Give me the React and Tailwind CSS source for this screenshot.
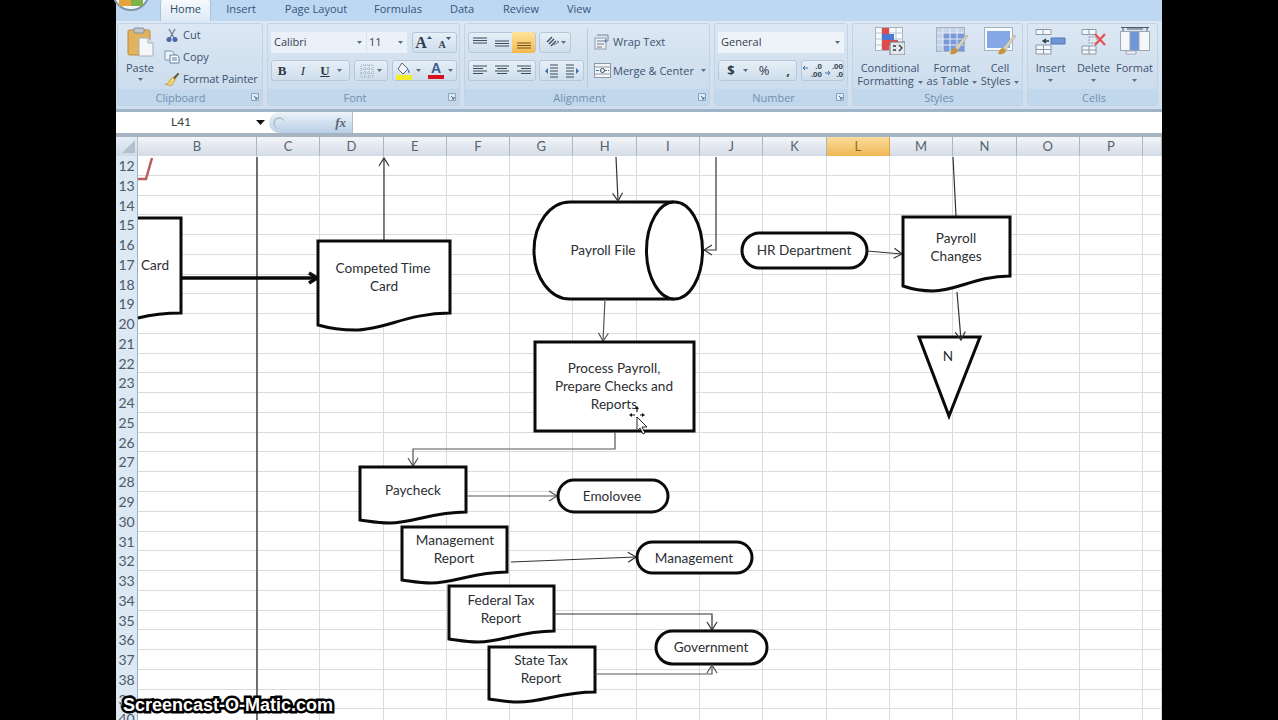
import { Fragment } from 'react'

const tabs = [
  { label: 'Home', width: 'w-[51px]', active: true },
  { label: 'Insert', width: 'w-[60px]' },
  { label: 'Page Layout', width: 'w-[90px]' },
  { label: 'Formulas', width: 'w-[74px]' },
  { label: 'Data', width: 'w-[54px]' },
  { label: 'Review', width: 'w-[64px]' },
  { label: 'View', width: 'w-[52px]' },
]

const columns = ['C', 'D', 'E', 'F', 'G', 'H', 'I', 'J', 'K', 'L', 'M', 'N', 'O', 'P', '']
const rows = Array.from({ length: 29 }, (_, i) => i + 12)

function Caret({ className = '' }) {
  return (
    <svg width="5" height="3" viewBox="0 0 5 3" className={`shrink-0 ${className}`}>
      <path d="M0 0h5L2.5 3z" fill="#5a6f86" />
    </svg>
  )
}

function Launcher() {
  return (
    <svg width="8" height="8" viewBox="0 0 8 8" className="shrink-0">
      <path d="M.5.5h7v7h-7z" fill="#dce8f4" stroke="#8ba3bb" />
      <path d="M3 3l3 3M6 4v2H4" stroke="#51667e" fill="none" />
    </svg>
  )
}

function Group({ label, className, labelClass = '', children }) {
  return (
    <div className={`flex h-[83px] shrink-0 flex-col overflow-hidden rounded-[3px] border border-[#c2d3e4] bg-gradient-to-b from-[#dce7f3] to-[#c9daeb] ${className}`}>
      <div className="flex min-h-0 flex-1">{children}</div>
      <div className="flex h-[16px] shrink-0 items-center bg-[#c1d7ec] pr-[3px]">
        <span className={`flex-1 text-center text-[11px] leading-none text-[#7590ad] ${labelClass}`}>{label}</span>
        {label !== 'Styles' && label !== 'Cells' && <Launcher />}
      </div>
    </div>
  )
}

function ButtonGroup({ className = '', children }) {
  return (
    <div className={`flex h-[21px] items-center rounded-[3px] border border-[#b5c8db] bg-gradient-to-b from-[#e7eff7] to-[#cfdeec] ${className}`}>
      {children}
    </div>
  )
}

function PasteIcon() {
  return (
    <svg width="27" height="30" viewBox="0 0 27 30">
      <rect x="1" y="3" width="22" height="25" rx="1.5" fill="#e3b25f" stroke="#b98a3e" />
      <rect x="7" y="1" width="10" height="5" rx="1" fill="#bfc7cf" stroke="#848f9a" />
      <path d="M12 11h9l5 5v13H12z" fill="#f4f6f8" stroke="#a7b1bb" />
      <path d="M21 11v5h5" fill="#dfe5ea" stroke="#a7b1bb" />
    </svg>
  )
}

function CutIcon() {
  return (
    <svg width="14" height="15" viewBox="0 0 14 15">
      <path d="M4 1l5 9M10 1L5 10" stroke="#7b8794" strokeWidth="1.5" />
      <circle cx="4" cy="11.5" r="2.5" fill="#4a66a8" />
      <circle cx="10" cy="11.5" r="2.5" fill="#4a66a8" />
    </svg>
  )
}

function CopyIcon() {
  return (
    <svg width="16" height="14" viewBox="0 0 16 14">
      <path d="M1 1h7l2 2v7H1z" fill="#eef3f8" stroke="#8097b0" />
      <path d="M6 5h7l2 2v6H6z" fill="#f9fbfd" stroke="#5f7fa6" />
      <path d="M8 8h5M8 10h5" stroke="#5f7fa6" />
    </svg>
  )
}

function PainterIcon() {
  return (
    <svg width="16" height="14" viewBox="0 0 16 14">
      <path d="M9 6l5-5 1 1-5 6z" fill="#6f5a38" stroke="#4f3f26" strokeWidth=".5" />
      <path d="M9 5l2 3-3 5c-2 1-5 0-7-1 3 0 4-1 4-3z" fill="#f2d46b" stroke="#a98b2f" strokeWidth=".6" />
    </svg>
  )
}

function GrowIcon({ small }) {
  return (
    <span className="flex w-[21px] items-start justify-center font-['Liberation_Serif',serif] font-bold leading-none text-[#2e3c4c]">
      <span className={small ? 'mt-[5px] text-[10px]' : 'mt-[1px] text-[16px]'}>A</span>
      <svg width="5" height="3" viewBox="0 0 5 3" className="mt-[2px]">
        <path d={small ? 'M0 0h5L2.5 3z' : 'M0 3h5L2.5 0z'} fill="#36557c" />
      </svg>
    </span>
  )
}

function BordersIcon() {
  return (
    <svg width="14" height="14" viewBox="0 0 14 14">
      <path d="M1 1h12v12H1zM5 1v12M9 1v12M1 5h12M1 9h12" fill="none" stroke="#9aa7b4" strokeDasharray="1 1" />
    </svg>
  )
}

function FillIcon() {
  return (
    <svg width="16" height="18" viewBox="0 0 16 18">
      <path d="M6 1l6 6-5 5-5-5z" fill="#f3f6f9" stroke="#56677a" />
      <path d="M12 7c2 2 2 4 1 4s-1-2-1-4z" fill="#3f78c2" />
      <rect x="0" y="13" width="16" height="5" fill="#f4ee29" />
    </svg>
  )
}

function FontColorIcon() {
  return (
    <span className="flex w-[16px] flex-col items-center">
      <span className="font-['Liberation_Sans',sans-serif] text-[14px] font-bold leading-[13px] text-[#3c5a94]">A</span>
      <span className="h-[4px] w-[16px] bg-[#d8121f]" />
    </span>
  )
}

// align lines: each entry is [x1, x2]
function Lines({ y, spans, w = 16, color = '#3d4a58' }) {
  return (
    <svg width={w} height="14" viewBox={`0 0 ${w} 14`}>
      {spans.map((s, i) => (
        <path key={i} d={`M${s[0]} ${y + i * 2.5}H${s[1]}`} stroke={color} strokeWidth="1.2" />
      ))}
    </svg>
  )
}

function OrientIcon() {
  return (
    <svg width="15" height="13" viewBox="0 0 15 13">
      <path d="M2 6l5-5M4 8l5-5M6 10l5-5" stroke="#3f4d5d" strokeWidth="1.4" />
      <path d="M9 9l5-3-2-1" stroke="#6a7d92" fill="none" />
    </svg>
  )
}

function IndentIcon({ flip }) {
  return (
    <svg width="15" height="14" viewBox="0 0 15 14" className={flip ? '-scale-x-100' : ''}>
      <path d="M6 1h8M6 4h8M6 7h8M6 10h8M6 13h8" stroke="#3d4a58" />
      <path d="M4 4L1 7l3 3z" fill="#3f6fb0" />
    </svg>
  )
}

function DecimalIcon({ top, bottom, arrowTop }) {
  return (
    <svg width="20" height="17" viewBox="0 0 20 17">
      <path d={arrowTop ? 'M1 6h5M3 4L1 6l2 2' : 'M2 11h5M5 9l2 2-2 2'} fill="none" stroke="#3f6fb0" />
      <text x="20" y="7" textAnchor="end" fontFamily="Liberation Sans, sans-serif" fontSize="8" fontWeight="700" fill="#2e3c4c">{top}</text>
      <text x="20" y="15" textAnchor="end" fontFamily="Liberation Sans, sans-serif" fontSize="8" fontWeight="700" fill="#2e3c4c">{bottom}</text>
    </svg>
  )
}

function WrapIcon() {
  return (
    <svg width="17" height="17" viewBox="0 0 17 17">
      <rect x="1" y="5" width="11" height="11" fill="#eef1f4" stroke="#909ba6" />
      <path d="M3 8h7M3 11h7M3 14h5" stroke="#6e7b88" />
      <path d="M3 2h11v6h-2" stroke="#7a8794" fill="none" />
      <path d="M12 6l-2 2 2 2z" fill="#3f6fb0" />
    </svg>
  )
}

function MergeIcon() {
  return (
    <svg width="17" height="15" viewBox="0 0 17 15">
      <rect x=".5" y=".5" width="16" height="14" fill="#f3f5f7" stroke="#8c98a4" />
      <path d="M.5 4h16M.5 11h16" stroke="#8c98a4" />
      <path d="M2 7.5h13" stroke="#3f6fb0" strokeDasharray="3 1" />
      <circle cx="8.5" cy="7.5" r="2" fill="#f3f5f7" stroke="#3d4a58" />
    </svg>
  )
}

function ConditionalIcon() {
  return (
    <svg width="30" height="28" viewBox="0 0 30 28">
      <rect x=".5" y=".5" width="27" height="23" fill="#f7fafc" stroke="#a5b3c1" />
      <path d="M7 1v23M14 1v23M21 1v23M1 6h27M1 12h27M1 18h27" stroke="#b7c4d1" />
      <rect x="7" y="1" width="7" height="6" fill="#df4b46" />
      <rect x="7" y="7" width="12" height="6" fill="#4d78d2" />
      <rect x="7" y="13" width="16" height="5" fill="#df4b46" />
      <rect x="7" y="18" width="7" height="5" fill="#df4b46" />
      <rect x="15" y="15" width="15" height="13" fill="#e4e7ea" stroke="#6b7580" />
      <path d="M18 19h3M18 23h3M24 18l3 3-3 3" stroke="#2f3a46" fill="none" strokeWidth="1.3" />
    </svg>
  )
}

function TableIcon() {
  return (
    <svg width="32" height="28" viewBox="0 0 32 28">
      <rect x=".5" y=".5" width="28" height="24" fill="#c5d3e8" stroke="#a5b3c1" />
      <rect x="7" y="6" width="21" height="18" fill="#7a9ad7" />
      <path d="M7 1v24M14 1v24M21 1v24M1 6h27M1 12h27M1 18h27" stroke="#e6edf6" />
      <path d="M19 21L30 8l2 1-10 14z" fill="#d8d2c0" stroke="#a79f89" strokeWidth=".5" />
      <path d="M14 27c1-4 3-6 5-6l3 2c0 3-4 5-8 4z" fill="#c8923a" />
    </svg>
  )
}

function StylesIcon() {
  return (
    <svg width="32" height="28" viewBox="0 0 32 28">
      <rect x=".5" y=".5" width="28" height="23" fill="#f7fafc" stroke="#a5b3c1" />
      <rect x="3" y="4" width="23" height="17" fill="#86a7e6" />
      <path d="M19 21L30 8l2 1-10 14z" fill="#d8d2c0" stroke="#a79f89" strokeWidth=".5" />
      <path d="M14 27c1-4 3-6 5-6l3 2c0 3-4 5-8 4z" fill="#c8923a" />
    </svg>
  )
}

function InsertIcon() {
  return (
    <svg width="32" height="26" viewBox="0 0 32 26">
      <path d="M1 .5h15v5H1zM1 5.500h15M8 .5v5M1 16h15v9H1zM8.500 16v9M1 20.500h15" fill="#f5f8fb" stroke="#8a98a7" />
      <path d="M16 9h14v6H16z" fill="#6f96d6" stroke="#5679b6" />
      <path d="M8 12h6M11 10l-3 2 3 2" stroke="#2e3a48" fill="none" strokeWidth="1.3" />
    </svg>
  )
}

function DeleteIcon() {
  return (
    <svg width="26" height="26" viewBox="0 0 26 26">
      <path d="M1 .5h14v5H1zM8 .5v5M1 17h14v8H1zM8 17v8M1 21h14" fill="#f5f8fb" stroke="#8a98a7" />
      <path d="M8 8h8v6H8z" fill="#dfe7f0" stroke="#8a98a7" strokeDasharray="2 1" />
      <path d="M14 5l10 11M24 5L14 16" stroke="#e4534f" strokeWidth="2.2" />
    </svg>
  )
}

function FormatIcon() {
  return (
    <svg width="30" height="28" viewBox="0 0 30 28">
      <path d="M1 .5h28M3 1v3M27 1v3M7 2h16" stroke="#4c5866" fill="none" />
      <rect x=".5" y="4.500" width="29" height="19" fill="#f5f8fb" stroke="#9aa7b4" />
      <rect x="10" y="5" width="9" height="18" fill="#6f96d6" />
      <path d="M10 5v18M19 5v18" stroke="#9aa7b4" />
      <path d="M6 24h10v3H6z" fill="#f5f8fb" stroke="#9aa7b4" />
    </svg>
  )
}

function Ribbon() {
  return (
    <div className="relative h-[112px] shrink-0 bg-gradient-to-b from-[#bdd7f2] to-[#c7dcf1] font-['Open_Sans',sans-serif] text-[#3b5470]">
      {/* office button, mostly cropped by the recording */}
      <div className="absolute left-[-4px] top-[-27px] flex h-[38px] w-[38px] items-center justify-center rounded-full border-2 border-[#7c95ad] bg-[#f3f7fb]">
        <div className="mt-[18px] flex">
          <span className="h-[10px] w-[12px] bg-[#e8a43a]" />
          <span className="h-[10px] w-[12px] bg-[#7fb34a]" />
        </div>
      </div>
      <div className="flex h-[21px] pl-[44px]">
        {tabs.map((t) => (
          <div
            key={t.label}
            className={`flex ${t.width} items-center justify-center pb-[3px] text-[11px] ${t.active ? 'rounded-t-[3px] border-x border-[#a9c2da] bg-gradient-to-b from-[#f6fafd] to-[#dde9f5] text-[#2c4a6b]' : 'text-[#34567c]'}`}
          >
            {t.label}
          </div>
        ))}
      </div>
      <div className="flex h-[91px] gap-[4px] border-b-[3px] border-[#9fb5c9] bg-gradient-to-b from-[#dbe7f4] to-[#cfdeee] pl-[1px] pt-[2px]">
        <Group label="Clipboard" className="w-[146px]" labelClass="pr-[8px]">
          <div className="flex w-[44px] flex-col items-center pt-[3px]">
            <PasteIcon />
            <span className="mt-[4px] text-[11px] leading-[14px]">Paste</span>
            <Caret className="mt-[3px]" />
          </div>
          <div className="ml-[1px] flex flex-col gap-[6px] pt-[3px] text-[11px] leading-[16px]">
            <div className="flex items-center gap-[3px]">
              <span className="flex w-[17px] justify-center"><CutIcon /></span>Cut
            </div>
            <div className="flex items-center gap-[3px]">
              <span className="flex w-[17px] justify-center"><CopyIcon /></span>Copy
            </div>
            <div className="flex items-center gap-[3px]">
              <span className="flex w-[17px] justify-center"><PainterIcon /></span>
              <span className="tracking-[-0.15px]">Format Painter</span>
            </div>
          </div>
        </Group>

        <Group label="Font" className="w-[193px]" labelClass="pr-[6px]">
          <div className="flex flex-col gap-[7px] pl-[3px] pt-[8px]">
            <div className="flex h-[21px] items-center">
              <div className="flex h-[21px] w-[95px] items-center justify-between bg-[#eaf1f8] pl-[3px] pr-[4px] text-[11px] text-[#33414f]">
                Calibri<Caret />
              </div>
              <div className="ml-[1px] flex h-[21px] w-[40px] items-center justify-between bg-[#eaf1f8] pl-[2px] pr-[4px] text-[11px] text-[#33414f]">
                11<Caret />
              </div>
              <ButtonGroup className="ml-[5px] w-[45px]">
                <GrowIcon />
                <GrowIcon small />
              </ButtonGroup>
            </div>
            <div className="flex items-center">
              <ButtonGroup className="w-[79px] font-['Liberation_Serif',serif] text-[13px] text-[#2b3744]">
                <span className="w-[20px] text-center font-bold">B</span>
                <span className="w-[22px] text-center italic">I</span>
                <span className="w-[22px] text-center font-bold underline">U</span>
                <Caret className="ml-[1px]" />
              </ButtonGroup>
              <ButtonGroup className="ml-[4px] w-[34px] justify-center gap-[3px]">
                <BordersIcon />
                <Caret />
              </ButtonGroup>
              <ButtonGroup className="ml-[4px] w-[65px] pl-[3px]">
                <FillIcon />
                <Caret className="ml-[4px]" />
                <span className="ml-[7px]"><FontColorIcon /></span>
                <Caret className="ml-[4px]" />
              </ButtonGroup>
            </div>
          </div>
        </Group>

        <Group label="Alignment" className="w-[246px]" labelClass="pr-[4px]">
          <div className="flex flex-col gap-[7px] pl-[3px] pt-[8px]">
            <div className="flex">
              <ButtonGroup className="w-[68px]">
                <span className="flex w-[22px] justify-center"><Lines y={2} spans={[[1, 15], [1, 15], [1, 15]]} /></span>
                <span className="flex w-[22px] justify-center"><Lines y={5} spans={[[1, 15], [1, 15], [1, 15]]} /></span>
                <span className="flex h-[21px] w-[23px] items-center justify-center rounded-r-[3px] bg-gradient-to-b from-[#fde59a] to-[#f7b84c]"><Lines y={7} spans={[[1, 15], [1, 15], [1, 15]]} color="#6b5320" /></span>
              </ButtonGroup>
              <ButtonGroup className="ml-[3px] w-[32px] justify-center gap-[1px]">
                <OrientIcon />
                <Caret />
              </ButtonGroup>
            </div>
            <div className="flex">
              <ButtonGroup className="w-[68px]">
                <span className="flex w-[22px] justify-center"><Lines y={2} spans={[[1, 15], [1, 11], [1, 15], [1, 11]]} /></span>
                <span className="flex w-[22px] justify-center"><Lines y={2} spans={[[1, 15], [3, 13], [1, 15], [3, 13]]} /></span>
                <span className="flex w-[22px] justify-center"><Lines y={2} spans={[[1, 15], [5, 15], [1, 15], [5, 15]]} /></span>
              </ButtonGroup>
              <ButtonGroup className="ml-[3px] w-[45px] justify-center gap-[6px]">
                <IndentIcon />
                <IndentIcon flip />
              </ButtonGroup>
            </div>
          </div>
          <div className="ml-[3px] mt-[4px] h-[59px] w-px bg-[#b9cbdc]" />
          <div className="flex flex-col gap-[12px] pl-[6px] pt-[9px] text-[11px] leading-[17px]">
            <div className="flex items-center gap-[2px]"><WrapIcon />Wrap Text</div>
            <div className="flex items-center gap-[2px]"><MergeIcon />Merge &amp; Center<Caret className="ml-[5px]" /></div>
          </div>
        </Group>

        <Group label="Number" className="w-[134px]" labelClass="pr-[4px]">
          <div className="flex flex-col gap-[7px] pl-[3px] pt-[8px]">
            <div className="flex h-[21px] w-[126px] items-center justify-between bg-[#eef3f9] pl-[3px] pr-[4px] text-[11px] text-[#33414f]">
              General<Caret />
            </div>
            <div className="flex">
              <ButtonGroup className="w-[79px] text-[13px] font-bold text-[#2e3c4c]">
                <span className="w-[24px] text-center">$</span>
                <Caret />
                <span className="w-[32px] text-center font-normal">%</span>
                <span className="w-[16px] text-center">,</span>
              </ButtonGroup>
              <ButtonGroup className="ml-[4px] w-[43px] justify-center gap-[1px]">
                <DecimalIcon top=".0" bottom=".00" arrowTop />
                <DecimalIcon top=".00" bottom=".0" />
              </ButtonGroup>
            </div>
          </div>
        </Group>

        <Group label="Styles" className="w-[171px]" labelClass="pl-[6px]">
          <div className="ml-[1px] flex w-[72px] flex-col items-center pt-[3px]">
            <ConditionalIcon />
            <span className="mt-[6px] text-[11px] leading-[13px]">Conditional</span>
            <span className="text-[11px] leading-[13px] whitespace-nowrap">Formatting <Caret className="ml-[1px] inline-block align-middle" /></span>
          </div>
          <div className="flex w-[52px] flex-col items-center pt-[3px]">
            <TableIcon />
            <span className="mt-[6px] text-[11px] leading-[13px]">Format</span>
            <span className="text-[11px] leading-[13px] whitespace-nowrap">as Table <Caret className="ml-[1px] inline-block align-middle" /></span>
          </div>
          <div className="flex w-[44px] flex-col items-center pt-[3px]">
            <StylesIcon />
            <span className="mt-[6px] text-[11px] leading-[13px]">Cell</span>
            <span className="text-[11px] leading-[13px] whitespace-nowrap">Styles <Caret className="ml-[1px] inline-block align-middle" /></span>
          </div>
        </Group>

        <Group label="Cells" className="w-[131px]" labelClass="pl-[6px]">
          <div className="flex w-[45px] flex-col items-center pt-[5px]">
            <InsertIcon />
            <span className="mt-[6px] text-[11px] leading-[13px]">Insert</span>
            <Caret className="mt-[5px]" />
          </div>
          <div className="flex w-[41px] flex-col items-center pt-[5px]">
            <DeleteIcon />
            <span className="mt-[6px] text-[11px] leading-[13px]">Delete</span>
            <Caret className="mt-[5px]" />
          </div>
          <div className="flex w-[41px] flex-col items-center pt-[3px]">
            <FormatIcon />
            <span className="mt-[6px] text-[11px] leading-[13px]">Format</span>
            <Caret className="mt-[5px]" />
          </div>
        </Group>
      </div>
    </div>
  )
}

function FormulaBar() {
  return (
    <div className="flex h-[25px] shrink-0 border-b-[4px] border-[#a6b3c0] bg-white font-['Lato',sans-serif] text-[12px] text-[#3a3f46]">
      <div className="flex h-[20px] w-[150px] items-center justify-between pl-[55px] pr-[1px]">
        L41
        <svg width="9" height="5" viewBox="0 0 9 5"><path d="M0 0h9L4.500 5z" fill="#111" /></svg>
      </div>
      <div className="ml-[3px] flex h-[21px] w-[84px] items-center justify-between rounded-l-full border-r border-[#aebccb] bg-gradient-to-b from-[#eef3f9] to-[#b9cfe6] pl-[4px] pr-[6px] font-['Liberation_Serif',serif] text-[13px] font-bold italic text-[#5b6570]">
        <span className="h-[12px] w-[12px] rounded-full border-l-2 border-t-2 border-[#b9c2cb]" />
        fx
      </div>
    </div>
  )
}

function Sheet() {
  return (
    <div className="relative min-h-0 flex-1 overflow-hidden bg-white font-['Lato',sans-serif]">
      <div className="grid h-[19px] grid-cols-[22px_119px_repeat(14,63.3px)_1fr] border-b border-[#9db0c6] text-[13px] leading-[19px] text-[#56636f]">
        <div className="border-r border-[#b4c2d0] bg-gradient-to-b from-[#e6edf5] to-[#cfdbe7]">
          <svg width="22" height="18" viewBox="0 0 22 18"><path d="M19 3v13H6z" fill="#b3c1cf" /></svg>
        </div>
        <div className="border-r border-[#a9b6c3] bg-gradient-to-b from-[#f3f5f8] to-[#d3dce6] text-center">B</div>
        {columns.map((c, i) => (
          <div
            key={i}
            className={`border-r text-center ${c === 'L' ? 'border-[#d9a548] bg-gradient-to-b from-[#f8dc9a] to-[#f1b653] text-[#8b6a2a]' : 'border-[#a9b6c3] bg-gradient-to-b from-[#f3f5f8] to-[#d3dce6]'}`}
          >
            {c}
          </div>
        ))}
      </div>
      {rows.map((r) => (
        <div key={r} className="grid h-[19.77px] grid-cols-[22px_119px_repeat(14,63.3px)_1fr] border-b border-[#d6dce2]">
          <div className="border-r border-[#9db0c6] bg-[#dce8f4] text-center text-[14px] leading-[20px] text-[#4c5966]">{r}</div>
          <div className="border-r border-[#d6dce2]" />
          {columns.map((c, i) => (
            <div key={i} className="border-r border-[#d6dce2]" />
          ))}
        </div>
      ))}
      <Flowchart />
      <div className="absolute bottom-[5px] left-[7px] font-['Liberation_Sans',sans-serif] text-[18px] font-bold leading-[20px] text-white [-webkit-text-stroke:5px_#000] [paint-order:stroke_fill]">
        Screencast-O-Matic.com
      </div>
    </div>
  )
}

const INK = '#0a0a0a'

function Doc({ x, y, w, h, dip, sag = 5, stroke = 3 }) {
  // document symbol: flat top, wavy bottom, lowest at about a quarter of the width
  const r = y + h
  const l = y + h + dip
  return (
    <path
      d={`M${x} ${y}H${x + w}V${r}C${x + w * 0.68} ${r} ${x + w * 0.5} ${l + sag} ${x + w * 0.28} ${l + sag}C${x + w * 0.16} ${l + sag} ${x + w * 0.08} ${l + sag - 2} ${x} ${l}Z`}
      fill="#fff"
      stroke={INK}
      strokeWidth={stroke}
    />
  )
}

function Pill({ x, y, w, h }) {
  return <rect x={x} y={y} width={w} height={h} rx={h / 2} fill="#fff" stroke={INK} strokeWidth="3" />
}

function Arrow({ d, tip, angle, color = '#333', width = 1.2 }) {
  return (
    <Fragment>
      <path d={d} fill="none" stroke={color} strokeWidth={width} />
      <path
        d="M-8 -5L0 0L-8 5"
        fill="none"
        stroke={color}
        strokeWidth={width}
        transform={`translate(${tip[0]} ${tip[1]}) rotate(${angle})`}
      />
    </Fragment>
  )
}

function Label({ x, y, children }) {
  return (
    <text x={x} y={y} textAnchor="middle" dominantBaseline="central" fontFamily="Lato, sans-serif" fontSize="13.6" fill="#2b2f33">
      {children}
    </text>
  )
}

function Flowchart() {
  return (
    <svg
      className="absolute left-0 top-0"
      width="1046"
      height="583"
      viewBox="116 137 1046 583"
    >
      <path d="M152 158l-6 21h-8" fill="none" stroke="#b5605c" strokeWidth="2.500" />
      <path d="M257 157V720" stroke="#444" strokeWidth="1.500" />

      <path d="M138 218H181V313C165 313 150 315 138 318" fill="#fff" stroke={INK} strokeWidth="3" />
      <Label x={155} y={265}>Card</Label>
      <Arrow d="M181 278H317" tip={[317, 278]} angle={0} color={INK} width={3.5} />

      <Doc x={318} y={241} w={132} h={72} dip={12} />
      <Label x={383} y={268}>Competed Time</Label>
      <Label x={384} y={286}>Card</Label>
      <Arrow d="M384 240V158" tip={[384, 158]} angle={-90} />

      <path d="M674 202H570A36 48.500 0 0 0 570 299H674" fill="#fff" stroke={INK} strokeWidth="3" />
      <ellipse cx="674.500" cy="250.500" rx="28" ry="48.500" fill="#fff" stroke={INK} strokeWidth="3" />
      <Label x={603} y={250}>Payroll File</Label>
      <Arrow d="M616 157L618 201" tip={[618, 201]} angle={87} />
      <Arrow d="M716 157V250H704" tip={[704, 250]} angle={180} />

      <Pill x={742} y={233} w={125} h={35} />
      <Label x={804} y={250}>HR Department</Label>
      <Arrow d="M867 251L902 254" tip={[902, 254]} angle={5} />

      <path d="M953 157L956 216" stroke="#333" strokeWidth="1.2" />
      <Doc x={903} y={217} w={107} h={59} dip={10} />
      <Label x={956} y={238}>Payroll</Label>
      <Label x={956} y={256}>Changes</Label>

      <path d="M919 337H980L949 416Z" fill="#fff" stroke={INK} strokeWidth="3" />
      <Arrow d="M957 292L961 340" tip={[961, 340]} angle={85} />
      <Label x={948} y={356}>N</Label>

      <Arrow d="M605 299L603 341" tip={[603, 341]} angle={93} color="#555" />
      <rect x="535" y="342" width="159" height="89" fill="#fff" stroke={INK} strokeWidth="3" />
      <Label x={614} y={368}>Process Payroll,</Label>
      <Label x={614} y={386}>Prepare Checks and</Label>
      <Label x={614} y={404}>Reports</Label>

      <Arrow d="M615 432V449H413V466" tip={[413, 466]} angle={90} color="#555" />
      <Doc x={360} y={467} w={106} h={45} dip={8} sag={3} />
      <Label x={413} y={490}>Paycheck</Label>
      <Arrow d="M467 496H557" tip={[557, 496]} angle={0} color="#555" />
      <Pill x={558} y={480} w={110} h={32} />
      <Label x={612} y={496}>Emolovee</Label>

      <Doc x={402} y={527} w={105} h={45} dip={8} sag={3} />
      <Label x={455} y={540}>Management</Label>
      <Label x={454} y={558}>Report</Label>
      <Arrow d="M511 562L636 557" tip={[636, 557]} angle={-2} />
      <Pill x={637} y={542} w={115} h={31} />
      <Label x={694} y={558}>Management</Label>

      <Doc x={449} y={586} w={105} h={45} dip={8} sag={3} />
      <Label x={501} y={600}>Federal Tax</Label>
      <Label x={501} y={618}>Report</Label>
      <Arrow d="M554 614H712V630" tip={[712, 630]} angle={90} />
      <Pill x={656} y={631} w={111} h={33} />
      <Label x={711} y={647}>Government</Label>

      <Doc x={489} y={647} w={106} h={45} dip={7} sag={3} />
      <Label x={541} y={660}>State Tax</Label>
      <Label x={541} y={678}>Report</Label>
      <Arrow d="M595 674H712V665" tip={[712, 665]} angle={-90} color="#555" />

      {/* move cursor */}
      <path d="M637 409v3M637 417v1M632 415h3M640 415h3" stroke="#111" strokeWidth="1.200" />
      <path d="M637 406l-2 3h4zM629 415l3-2v4zM645 415l-3-2v4z" fill="#111" />
      <path d="M637 417v14l3-3 3 6 2-1-3-6h5z" fill="#fff" stroke="#111" strokeWidth=".9" />
    </svg>
  )
}

export default function App() {
  return (
    <div className="flex h-[720px] w-[1278px] overflow-hidden bg-black">
      <div className="ml-[116px] flex h-full w-[1046px] flex-col">
        <Ribbon />
        <FormulaBar />
        <Sheet />
      </div>
    </div>
  )
}
